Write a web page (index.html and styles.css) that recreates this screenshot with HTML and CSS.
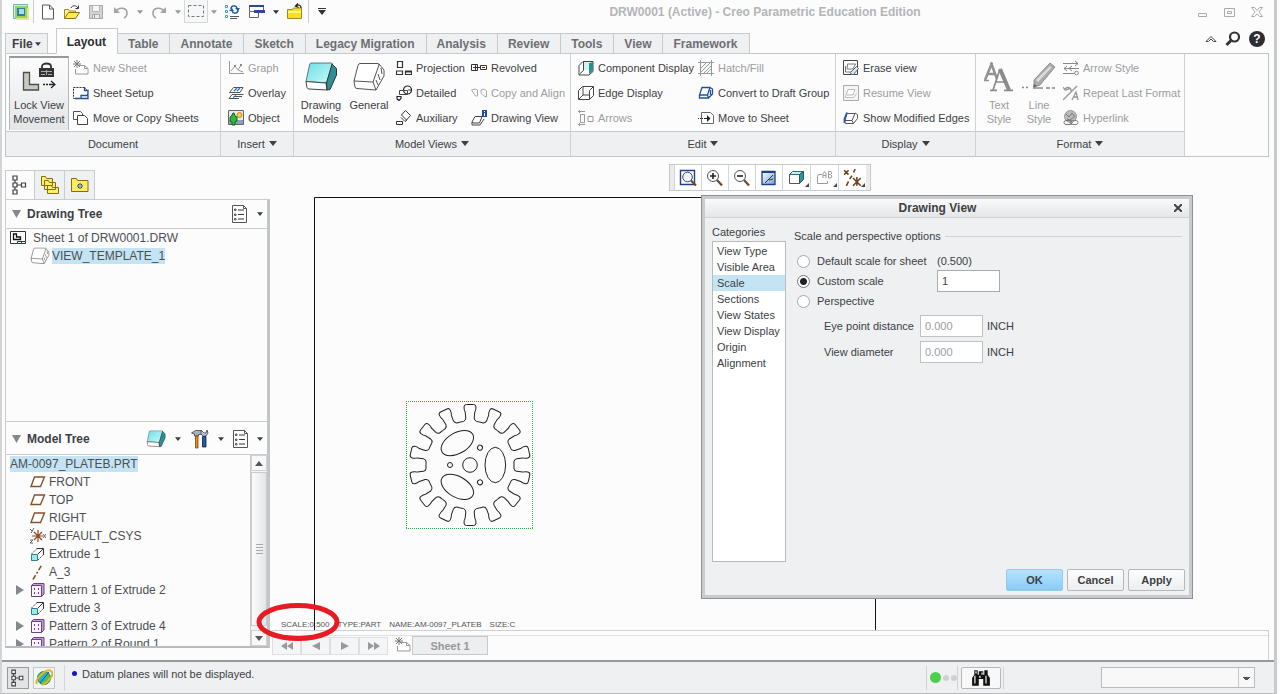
FILE: index.html
```html
<!DOCTYPE html>
<html lang="en">
<head>
<meta charset="utf-8">
<title>DRW0001 (Active) - Creo Parametric Education Edition</title>
<link rel="stylesheet" href="styles.css">
</head>
<body>
<svg class="defs" aria-hidden="true">
  <defs>
    <linearGradient id="teal" x1="0" y1="0" x2="1" y2="1"><stop offset="0" stop-color="#6fdfe4"/><stop offset="1" stop-color="#c9fbf8"/></linearGradient>
    <linearGradient id="lens" x1="0" y1="0" x2="1" y2="1"><stop offset="0" stop-color="#fff"/><stop offset="1" stop-color="#6fa3d8"/></linearGradient>
  </defs>
  <symbol id="app" viewBox="0 0 18 18"><path fill="#d5ebf4" stroke="#78aec8" d="M1.500 1.500h14v14h-14z"/><path fill="#9ed05a" d="M3 3h12v12H3z"/><path fill="#2c7fa8" d="M5 5h8v8H5z"/><path fill="#9ee0ee" d="M7 6h5v5H7z"/><path stroke="#dcea8a" fill="none" stroke-width="2" d="M4 16h12V5"/></symbol>
  <symbol id="page" viewBox="0 0 16 16"><path fill="#fff" stroke="#555" d="M2.500 1.500h7l4 4v10h-11zM9.500 1.500v4h4"/></symbol>
  <symbol id="open" viewBox="0 0 18 16"><path fill="#fdf28a" stroke="#a98722" d="M1.500 14.500v-9h4l1 1.500h6v2"/><path fill="#fcec4e" stroke="#8c701a" d="M1.500 14.500l4-6h11l-4 6z"/><path fill="none" stroke="#333" d="M8 4c1.500-3 5-3 7 0M12.500 4.500H15.500V1.500"/></symbol>
  <symbol id="save" viewBox="0 0 16 16"><path fill="#d4d4d4" stroke="#a6a6a6" d="M1.500 1.500h13v13h-13z"/><path fill="#f6f6f6" stroke="#b5b5b5" d="M4.500 1.500h7v6h-7z"/><path fill="#eee" stroke="#aaa" d="M4.500 10.500h7v4h-7z"/><path stroke="#999" d="M6.500 11v3"/></symbol>
  <symbol id="undo" viewBox="0 0 16 16"><path fill="none" stroke="#a3a3a3" stroke-width="1.600" d="M3 7c3-4 11-4 11 2 0 2-1 4-3 5"/><path fill="#a3a3a3" d="M1 3v6h6z"/></symbol>
  <symbol id="redo" viewBox="0 0 16 16"><path fill="none" stroke="#a3a3a3" stroke-width="1.600" d="M13 7C10 3 2 3 2 9c0 2 1 4 3 5"/><path fill="#a3a3a3" d="M15 3v6H9z"/></symbol>
  <symbol id="marquee" viewBox="0 0 16 16"><path fill="none" stroke="#777" stroke-dasharray="3 2" d="M.5 2.500h15v11H.5z"/></symbol>
  <symbol id="regen" viewBox="0 0 16 16"><path fill="none" stroke="#3aa6b4" d="M1.500 1.500h2v2h-2zM1.500 6.500h2v2h-2zM1.500 11.500h2v2h-2z"/><path stroke="#555" d="M6 12.500h9M6 14.500h7"/><path fill="none" stroke="#1b5aa8" stroke-width="1.500" d="M7 5c0-4 5-4 6-1M14 6c0 4-5 4-6 1"/><path fill="#1b5aa8" d="M11 4h5l-2 3zM5 7h5L8 4z"/></symbol>
  <symbol id="windows" viewBox="0 0 16 16"><path fill="#fff" stroke="#666" d="M.5 1.500h14v6H.5z"/><path fill="#fff" stroke="#666" d="M.5 7.500h9v6H.5z"/><path fill="#2d4a9a" d="M0 1h15v2H0zM5 6h11v3H5z"/></symbol>
  <symbol id="folderback" viewBox="0 0 16 17"><path fill="#f6df2a" stroke="#a08a14" d="M.5 15.500v-9h5l1-1.500h8v10.500z"/><path fill="#fdf67c" d="M1 8h13v2H1z"/><path fill="none" stroke="#222" stroke-width="1.300" d="M14 5c0-3-2-3.500-5-2.500M11 .5L8.500 3l3 1.500"/></symbol>
  <symbol id="down" viewBox="0 0 8 5"><path fill="currentColor" d="M0 0h8L4 5z"/></symbol>
  <symbol id="fold" viewBox="0 0 9 8"><path fill="currentColor" d="M0 0h9L4.500 8z"/></symbol>
  <symbol id="lock" viewBox="0 0 34 30"><path fill="#c9c9c0" stroke="#4c4c4c" stroke-width="1.300" d="M1.500 10.500h6v12h9v5.500h-15z"/><path fill="none" stroke="#333" stroke-width="1.800" d="M20 7V4.500c0-4 9-4 9 0V7"/><path fill="#333" d="M17 6h15v9H17z"/><path stroke="#aaa" d="M19 9.500h11M19 12.500h4M26 12.500h4M24.500 8v5"/><path stroke="#222" stroke-width="1.300" d="M21 22.500h2M24 22.500h2M27 22.500h5"/><path fill="none" stroke="#222" stroke-width="1.200" d="M29 19l4 3.500-4 3.500"/></symbol>
  <symbol id="newsheet" viewBox="0 0 16 16"><path fill="#fff" stroke="#999" d="M5.500 5.500h6l3.500 3v5.500H2.500V9M11.500 5.500v3h3.500"/><path stroke="#777" d="M4 0v8M0 4h8M1 1l6 6M7 1L1 7"/></symbol>
  <symbol id="setup" viewBox="0 0 16 16"><path fill="none" stroke="#333" stroke-dasharray="2 1" d="M.5 2.500h11l3 3v8H.5z"/><path fill="#fff" stroke="#234c9a" stroke-width="1.300" d="M8 13.500v-3h7v3zM11.500 2v3.500H15v4M2 13.500h5"/></symbol>
  <symbol id="copy" viewBox="0 0 16 16"><path fill="#fff" stroke="#555" d="M.5 1.500h7l2 2v6h-9z"/><path fill="#fff" stroke="#444" d="M4.500 5.500h7l3 3v6h-10z"/></symbol>
  <symbol id="graph" viewBox="0 0 16 16"><path fill="none" stroke="#999" d="M1.500 1v12.500H16M3 11l4-5 3 4 3-5M10 10l5 2"/><path fill="#888" d="M6 5h2v2H6zM12 4h2v2h-2z"/></symbol>
  <symbol id="overlay" viewBox="0 0 16 16"><path fill="#fff" stroke="#555" d="M5.500 2.500H15l-3 5H1.500zM4 9.500h11.500M4 9.500l-3 4h10M7 11.500h7"/><path stroke="#2e6cc0" stroke-width="1.300" d="M6 6l3-3M9 6l3-3M5 12.500l3-2"/></symbol>
  <symbol id="object" viewBox="0 0 16 16"><path fill="#e9e9f6" stroke="#666" d="M.5.5h15v14H.5z"/><path fill="#8aa0b8" d="M1 10h14v4H1z"/><circle cx="11.500" cy="5" r="2.500" fill="#f7d23a" stroke="#c98a20"/><path fill="#36b341" stroke="#11641a" d="M5 3L3.500 6 2 7v4l2 1v3h3v-3l2-1V7L7 6 6 3z"/></symbol>
  <symbol id="solid" viewBox="0 0 34 30"><path fill="url(#teal)" stroke="#456" stroke-width=".8" d="M7 1h20q2 0 1.500 2L22.500 21 2 19.500 5.500 3Q6 1 7 1z"/><path fill="#fff" stroke="#444" d="M2 19.500L22 21l1 7L5 27q-1.500 0-2-1.500z"/><path fill="#2f8f96" stroke="#333" d="M22.500 21L28 2l4.500 4.500V13L26 27.500l-3 .5z"/></symbol>
  <symbol id="wire" viewBox="0 0 34 30"><path fill="#fff" stroke="#555" d="M8 1.500h18q1 0 1 1.500l-6 17-19-1L6 3.500Q6.500 1.500 8 1.500zM2 19l1 6q.5 1.500 2 1.500l19 1.500L21 20M24 28l8-14V8l-5-6M24 18l2 5M26 12l2 6M29 6l1 6"/></symbol>
  <symbol id="projection" viewBox="0 0 16 16"><path fill="none" stroke="#333" stroke-width="1.200" d="M1.500 1.500h5v6h-5zM.5 11h6v3.500h-6zM9.500 11h6v3.500h-6zM9.500 12h6"/></symbol>
  <symbol id="detailed" viewBox="0 0 16 16"><circle cx="11.500" cy="5" r="4" fill="none" stroke="#222" stroke-width="1.200"/><path fill="none" stroke="#444" d="M3.500 5.500h8v4h-8zM12 5h3"/><path fill="none" stroke="#222" stroke-width="1.200" d="M1 11.500h4v2l-2 2-2-1.500z"/></symbol>
  <symbol id="auxiliary" viewBox="0 0 16 16"><path fill="#fff" stroke="#333" d="M9.500.5l5 5-4 4.500-5-5zM5 7.500l4 4 2-1.500M.5 11.500h6v3h-6z"/></symbol>
  <symbol id="revolved" viewBox="0 0 16 16"><path fill="none" stroke="#333" d="M.5 4.500h6v6h-6zM9.500 5.500h6v4h-6zM2 7.500h7M11 7.500h3M4.500 5v5"/></symbol>
  <symbol id="align" viewBox="0 0 16 16"><path fill="none" stroke="#aaa" d="M.5 5q4-2 6 0v6h-2zM10 5q4-2 5.500 1v6q-4-1-5.500-4z"/></symbol>
  <symbol id="viewinfo" viewBox="0 0 16 16"><path fill="#fff" stroke="#444" d="M4 6.500h7L8.500 13H3q-2 0-2-1zM1 12v3h8l4-6"/><path fill="#224c9e" d="M11 0h5v7h-5z"/><path stroke="#fff" d="M13.500 1v1M13.500 3v3"/></symbol>
  <symbol id="component" viewBox="0 0 16 16"><path fill="#fff" stroke="#444" d="M1 5.500l4-4h10v10l-4 3.500H1z"/><path fill="#fff" stroke="#444" d="M5.500 1.500v9L1 14.500"/><path fill="#cbf4f1" d="M6 2h5v8H6z"/><path fill="#28908e" d="M11 3l4-1v9l-4 3z"/></symbol>
  <symbol id="edge" viewBox="0 0 16 16"><path fill="#fff" stroke="#444" d="M.5 5.500l4-4h11v9l-4 4H.5zM5 2v8h7M5 10l-4 4M11.500 14V5.500L15 2"/></symbol>
  <symbol id="arrows" viewBox="0 0 16 16"><path fill="none" stroke="#999" d="M2.500 4.500h4v8h-4zM10 6.500h5v5h-5zM0 1.500h7M2 0L.5 1.500 2 3M0 14.500h7M2 13L.5 14.500 2 16"/></symbol>
  <symbol id="hatch" viewBox="0 0 16 16"><path fill="none" stroke="#999" d="M0 2.500h16M0 13.500h16M2.500 0v16M13.500 0v16M3 8l5-5M3 12l9-9M6 13l7-7M9 13l4-4"/></symbol>
  <symbol id="convert" viewBox="0 0 16 16"><path fill="#fff" stroke="#23509e" stroke-width="1.300" d="M4 2.500h8L9.500 10h-8zM1.500 10v3h9l4-4V4L12 2.500M9.500 10l1 3M12.500 5v5"/></symbol>
  <symbol id="move" viewBox="0 0 16 16"><path fill="#fff" stroke="#666" d="M3.500 2.500h9l3 3v8h-12z"/><path stroke="#222" stroke-dasharray="1 1" d="M0 8.500h6"/><path fill="#222" d="M6 8h3V5l3.500 3.500L9 12V9H6z"/></symbol>
  <symbol id="erase" viewBox="0 0 16 16"><path fill="#fff" stroke="#444" d="M.5.5h14v14H.5z"/><path fill="none" stroke="#777" d="M4.500 4h8L10 9H4zM2.500 6v6h6"/><path fill="#dfe8ef" stroke="#567" d="M7.500 12.500l6-6 2 2-5 6h-2z"/></symbol>
  <symbol id="resume" viewBox="0 0 16 16"><path fill="#f5f5f5" stroke="#aaa" d="M.5.5h15v15H.5z"/><path fill="#fff" stroke="#bbb" d="M5 4.500h7L10 10H3zM2.500 10.500v2h8l3-4"/></symbol>
  <symbol id="modified" viewBox="0 0 16 16"><path fill="#fff" stroke="#555" d="M4 3.500h8L9 10.500H2zM1.500 11l1 2.500h8l4-5v-4L12 3M9 10.500l1.500 3"/><path fill="none" stroke="#2458a8" stroke-width="1.800" d="M4 2.500L1.500 9v4"/></symbol>
  <symbol id="textstyle" viewBox="0 0 30 30"><path fill="none" stroke="#929292" stroke-width="2.500" d="M1 18L7.500 2 13 17M4 12h7"/><path fill="none" stroke="#929292" stroke-width="1.500" d="M0 18.500h5M6 1.500h3"/><path fill="none" stroke="#8b8b8b" stroke-width="4" d="M16 7l9 21"/><path fill="none" stroke="#8b8b8b" stroke-width="1.700" d="M16 7L9 28M12 20h10M6 28.300h7M20 28.300h9"/></symbol>
  <symbol id="linestyle" viewBox="0 0 34 30"><path fill="#ababab" stroke="#8f8f8f" d="M12 18L28 1l5 4-15 18-6 2z"/><path fill="#ddd" d="M14 18L28 4l1.500 1.500L16 20z"/><path fill="#666" d="M12 22l-1 4 4-2z"/><path stroke="#888" stroke-width="1.500" d="M0 25.500h2M4 25.500h2M11 26h10M24 26h4M30 26h3"/></symbol>
  <symbol id="arrowstyle" viewBox="0 0 16 16"><path fill="none" stroke="#888" d="M0 3.500h15M12 1l3 2.500L12 6M1 8.500h15M4 6L1 8.500 4 11M9 6L6 8.500 9 11M0 13.500h12"/><circle cx="13.500" cy="13" r="1.800" fill="#fff" stroke="#888"/></symbol>
  <symbol id="repeat" viewBox="0 0 16 16"><path fill="none" stroke="#999" stroke-width="1.300" d="M2 5c1-4 6-3 6 1M0 2l2 3 4-1M0 15L14 1M9 15l4-8 2 8M10 12h5"/></symbol>
  <symbol id="hyperlink" viewBox="0 0 16 16"><circle cx="7.500" cy="6.500" r="6" fill="#bcbcbc" stroke="#999"/><path fill="none" stroke="#777" d="M3 4l3 3 3-4 3 4M4 9l3 1 4-3"/><rect x="1" y="10.500" width="8" height="4" rx="2" fill="none" stroke="#777"/><rect x="7" y="10.500" width="8" height="4" rx="2" fill="none" stroke="#888"/></symbol>
  <symbol id="tree" viewBox="0 0 16 20"><path fill="#fff" stroke="currentColor" stroke-width="1.200" d="M3 5v3M3 12v3M5 10h4M1 1h4v4H1zM1 8h4v4H1zM1 15h4v4H1zM9.500 8h4v4h-4z"/></symbol>
  <symbol id="folders" viewBox="0 0 20 20"><path fill="#f8ef6a" stroke="#846c14" d="M1.500 10.500v-9h4l1 2h6v7zM4.500 14.500v-9h4l1 2h6v7zM7.500 18.500v-8h4l1 2h6v6z"/></symbol>
  <symbol id="favorites" viewBox="0 0 18 16"><path fill="#f7ed5f" stroke="#846c14" d="M.5 14.500v-13h5l1 2h10.500v11z"/><path stroke="#1a2f9c" d="M9 6v6M6 9h6M7 7l4 4M11 7l-4 4"/><circle cx="9" cy="9" r="1" fill="#f7ed5f"/></symbol>
  <symbol id="settings" viewBox="0 0 16 18"><path fill="#fff" stroke="#555" d="M.5.5h11l3 3v14H.5zM11.500.5v3h3"/><path stroke="#333" d="M6 5h6M6 9.500h6M6 14h6"/><path fill="none" stroke="#555" d="M2.500 4h1.500v1.500H2.500zM2.500 9h1.500v1.500H2.500zM2.500 13.500h1.500v1.500H2.500z"/></symbol>
  <symbol id="sheet" viewBox="0 0 16 14"><path fill="#fff" stroke="#333" d="M.5.5h15v12H.5z"/><path fill="#fff" stroke="#111" stroke-width="1.300" d="M3.500 3v5.500h7V6h-4V3z"/><path fill="#fff" stroke="#23309c" d="M7.500 10.500h8v2h-8zM11.500 10v3"/></symbol>
  <symbol id="tools" viewBox="0 0 18 20"><path fill="#aab3bc" stroke="#444" stroke-width=".8" d="M.5 4l4-2.500h6v4H7.500V7h-4V5z"/><path fill="#e48a1e" stroke="#7d4508" stroke-width=".8" d="M4.500 7h2.500v12H4.500z"/><path fill="#bcc9d6" stroke="#345" stroke-width=".8" d="M10 1v4l2 2h3l2-3-1-3-1 3h-2z"/><path fill="#2857a8" stroke="#123" stroke-width=".8" d="M11.500 7.500h3.500V18h-3.500z"/></symbol>
  <symbol id="plane" viewBox="0 0 16 12"><path fill="#fff" stroke="#8a5028" stroke-width="1.400" d="M4.500 1h10l-4 9.500H1z"/></symbol>
  <symbol id="csys" viewBox="0 0 16 16"><path stroke="#8a4a22" stroke-width="1.200" d="M8 2v12M2 8h11M4 4l8 8M12 4l-8 8"/><path fill="none" stroke="#666" d="M0 1l2 2M4 0L1 5M13 6l3 4M16 6l-3 4M0 12h3l-3 3h3"/></symbol>
  <symbol id="extrude" viewBox="0 0 16 16"><path fill="#9fe9ec" stroke="#2f8088" d="M1.500 8.500h6v6h-6z"/><path fill="none" stroke="#555" stroke-dasharray="2 1" d="M1.500 8L7 2.500M8 14l6-6"/><path fill="none" stroke="#333" d="M8 8l5-5M7 2.500h6.500V9"/></symbol>
  <symbol id="axis" viewBox="0 0 16 16"><path stroke="#8a4a22" stroke-width="1.500" stroke-dasharray="5 2 2 2" d="M3 15.500L12 .5"/></symbol>
  <symbol id="pattern" viewBox="0 0 16 16"><path fill="#c49bdd" stroke="#6a4585" d="M1 4l2.500-2.500H14v10.500l-2.500 2.500z"/><path fill="#fbf3ff" stroke="#6a4585" d="M1.500 3.500h10v11h-10z"/><path fill="#6a4592" d="M4 6h1v2H4zM8 6h1v2H8zM4 10h1v2H4zM8 10h1v2H8z"/></symbol>
  <symbol id="fit" viewBox="0 0 18 18"><path fill="#fff" stroke="#1f3f8f" stroke-width="1.400" d="M1.500 1.500h14v14h-14z"/><circle cx="8.500" cy="8" r="4.800" fill="#edf5fb" stroke="#444"/><path stroke="#70482c" stroke-width="2.200" d="M12 11.500l5 5"/></symbol>
  <symbol id="zoomin" viewBox="0 0 18 18"><circle cx="7" cy="7" r="5.500" fill="#fafcfd" stroke="#555"/><path stroke="#222" stroke-width="1.600" d="M4 7h6M7 4v6"/><path stroke="#70482c" stroke-width="2.200" d="M11 11l5 5.500"/></symbol>
  <symbol id="zoomout" viewBox="0 0 18 18"><circle cx="7" cy="7" r="5.500" fill="#fafcfd" stroke="#555"/><path stroke="#222" stroke-width="1.600" d="M4 7h6"/><path stroke="#70482c" stroke-width="2.200" d="M11 11l5 5.500"/></symbol>
  <symbol id="repaint" viewBox="0 0 18 18"><path fill="url(#lens)" stroke="#1f3f8f" stroke-width="1.300" d="M2 2.500h13v13H2z"/><path stroke="#1f3f8f" stroke-width="2" d="M2 3h13"/><path fill="none" stroke="#334" d="M5 14l8-8M9 11l4-1"/></symbol>
  <symbol id="cube" viewBox="0 0 18 18"><path fill="#fff" stroke="#555" d="M1.500 5.500h10v9h-10z"/><path fill="#bff3f0" stroke="#367" d="M1.500 5.500l3-3h11l-4 3z"/><path fill="#249c9a" stroke="#355" d="M11.500 5.500l4-3v8l-4 4z"/></symbol>
  <symbol id="annot" viewBox="0 0 18 18"><path fill="#fff" stroke="#999" d="M6 5.500H2.500l-1 2v7h10V12"/><path fill="none" stroke="#999" d="M7 9V4.500l1.500-2L10 4.500V9M7 6.500h3M12.500 9V2.500H15l1 1.500-1.500 1.500L16 7l-1 2zM12.500 5.500h2"/></symbol>
  <symbol id="datum" viewBox="0 0 18 18"><path stroke="#70401c" stroke-width="1.400" d="M1 2l4 4M5 2L1 6M11 1L9.500 4M8 7l-2 3M5 12l-2 4M9 9l7 7M16 9l-7 7M12.500 8v8"/></symbol>
  <symbol id="globe" viewBox="0 0 18 18"><circle cx="9" cy="9" r="6.500" fill="#4cc05b" stroke="#137c83"/><path fill="#2cb5d0" d="M4 8l5-4 4 1-5 8-3 1z"/><path fill="none" stroke="#e3b61a" stroke-width="2" d="M2 15C-1 10 12-1 16 2s-2 11-9 14"/><path fill="none" stroke="#175b88" d="M5 14L14 3"/></symbol>
  <symbol id="binoc" viewBox="0 0 18 16"><path fill="#111" d="M3 1h3v4h1V2h4v3h1V1h3v4l2 3v7h-6V9H7v6H1V8l2-3z"/><path stroke="#ddd" stroke-width="1.200" d="M3.500 6v7M13.500 6v7M8 6v2M10 3v2M4.500 2v2"/></symbol>
  <symbol id="search" viewBox="0 0 16 16"><circle cx="9.500" cy="6" r="4.500" fill="none" stroke="#333" stroke-width="2.200"/><path stroke="#333" stroke-width="3" d="M6 9.500L1.500 14"/></symbol>
  <symbol id="tooth" viewBox="-65 -65 130 130"><path fill="none" stroke="#222" d="M-9.800-42.900L-6.500-43.600Q-4.200-44.500-4.200-47L-4.800-53Q-6-55-6-58Q-6-60.500-3.500-60.500H3.500Q6-60.500 6-58Q6-55 4.800-53L4.200-47Q4.200-44.500 6.500-43.600L9.800-42.900"/></symbol>
</svg>

<div class="app">
  <header>
    <div class="quick">
      <span class="logo"><svg width="18" height="18"><use href="#app"/></svg></span>
      <button class="q" aria-label="New"><svg width="16" height="17"><use href="#page"/></svg></button>
      <button class="q" aria-label="Open"><svg width="18" height="16"><use href="#open"/></svg></button>
      <button class="q" aria-label="Save"><svg width="16" height="16"><use href="#save"/></svg></button>
      <button class="q wide" aria-label="Undo"><svg width="16" height="16"><use href="#undo"/></svg></button>
      <button class="drop dim" aria-label="Undo list"><svg width="6" height="4"><use href="#down"/></svg></button>
      <button class="q wide" aria-label="Redo"><svg width="16" height="16"><use href="#redo"/></svg></button>
      <button class="drop dim" aria-label="Redo list"><svg width="6" height="4"><use href="#down"/></svg></button>
      <button class="q boxed" aria-label="Select"><svg width="16" height="16"><use href="#marquee"/></svg></button>
      <button class="drop dim" aria-label="Select list"><svg width="6" height="4"><use href="#down"/></svg></button>
      <button class="q" aria-label="Regenerate"><svg width="16" height="16"><use href="#regen"/></svg></button>
      <button class="q wide" aria-label="Windows"><svg width="16" height="16"><use href="#windows"/></svg></button>
      <button class="drop" aria-label="Windows list"><svg width="6" height="4"><use href="#down"/></svg></button>
      <button class="q wide" aria-label="Close window"><svg width="16" height="17"><use href="#folderback"/></svg></button>
      <button class="drop more" aria-label="Customize"><svg width="8" height="7" viewBox="0 0 8 7"><path fill="#333" d="M0 0h8v1H0zM0 2h8L4 7z"/></svg></button>
      <h1>DRW0001 (Active) - Creo Parametric Education Edition</h1>
      <div class="winctl">
        <button aria-label="Minimize"><svg width="12" height="12" viewBox="0 0 12 12"><path fill="none" stroke="#aaa" d="M1.500 7.500h8v3h-8z"/></svg></button>
        <button aria-label="Restore"><svg width="12" height="12" viewBox="0 0 12 12"><path fill="none" stroke="#aaa" d="M.5 2.500h10v8H.5zM3.500 5.500h4v2h-4z"/></svg></button>
        <button aria-label="Close"><svg width="12" height="12" viewBox="0 0 12 12"><path fill="none" stroke="#aaa" d="M.5 1.500h3l2.500 3 2.500-3h3L8 6l3.500 4.500h-3L6 8l-2.500 2.500h-3L4 6z"/></svg></button>
      </div>
    </div>

    <nav class="tabs">
      <button class="file">File <svg width="6" height="4"><use href="#down"/></svg></button>
      <button class="active">Layout</button><button>Table</button><button>Annotate</button><button>Sketch</button><button>Legacy Migration</button><button>Analysis</button><button>Review</button><button>Tools</button><button>View</button><button>Framework</button>
      <div class="help">
        <button aria-label="Collapse ribbon"><svg width="12" height="8" viewBox="0 0 12 8"><path fill="#fff" stroke="#444" d="M1 6.500l5-5 5 5H8.500L6 4 3.500 6.500z"/></svg></button>
        <button aria-label="Search"><svg width="16" height="16"><use href="#search"/></svg></button>
        <button class="qm" aria-label="Help">?</button>
      </div>
    </nav>

    <div class="ribbon">
      <section class="g-doc">
        <div class="tools">
          <button class="big pressed"><svg width="34" height="30"><use href="#lock"/></svg>Lock View<br>Movement</button>
          <div class="col"><button class="t dis"><svg><use href="#newsheet"/></svg>New Sheet</button><button class="t"><svg><use href="#setup"/></svg>Sheet Setup</button><button class="t"><svg><use href="#copy"/></svg>Move or Copy Sheets</button></div>
        </div>
        <footer>Document</footer>
      </section>
      <section class="g-ins">
        <div class="tools"><div class="col"><button class="t dis"><svg><use href="#graph"/></svg>Graph</button><button class="t"><svg><use href="#overlay"/></svg>Overlay</button><button class="t"><svg><use href="#object"/></svg>Object</button></div></div>
        <footer>Insert <svg><use href="#down"/></svg></footer>
      </section>
      <section class="g-mod">
        <div class="tools">
          <button class="big"><svg width="34" height="30"><use href="#solid"/></svg>Drawing<br>Models</button>
          <button class="big"><svg width="34" height="30"><use href="#wire"/></svg>General<br>&nbsp;</button>
          <div class="col"><button class="t"><svg><use href="#projection"/></svg>Projection</button><button class="t"><svg><use href="#detailed"/></svg>Detailed</button><button class="t"><svg><use href="#auxiliary"/></svg>Auxiliary</button></div>
          <div class="col"><button class="t"><svg><use href="#revolved"/></svg>Revolved</button><button class="t dis"><svg><use href="#align"/></svg>Copy and Align</button><button class="t"><svg><use href="#viewinfo"/></svg>Drawing View</button></div>
        </div>
        <footer>Model Views <svg><use href="#down"/></svg></footer>
      </section>
      <section class="g-edit">
        <div class="tools">
          <div class="col"><button class="t"><svg><use href="#component"/></svg>Component Display</button><button class="t"><svg><use href="#edge"/></svg>Edge Display</button><button class="t dis"><svg><use href="#arrows"/></svg>Arrows</button></div>
          <div class="col"><button class="t dis"><svg><use href="#hatch"/></svg>Hatch/Fill</button><button class="t"><svg><use href="#convert"/></svg>Convert to Draft Group</button><button class="t"><svg><use href="#move"/></svg>Move to Sheet</button></div>
        </div>
        <footer>Edit <svg><use href="#down"/></svg></footer>
      </section>
      <section class="g-disp">
        <div class="tools"><div class="col"><button class="t"><svg><use href="#erase"/></svg>Erase view</button><button class="t dis"><svg><use href="#resume"/></svg>Resume View</button><button class="t"><svg><use href="#modified"/></svg>Show Modified Edges</button></div></div>
        <footer>Display <svg><use href="#down"/></svg></footer>
      </section>
      <section class="g-fmt">
        <div class="tools">
          <button class="big dis"><svg width="30" height="30"><use href="#textstyle"/></svg>Text<br>Style</button>
          <button class="big dis"><svg width="34" height="30"><use href="#linestyle"/></svg>Line<br>Style</button>
          <div class="col"><button class="t dis"><svg><use href="#arrowstyle"/></svg>Arrow Style</button><button class="t dis"><svg><use href="#repeat"/></svg>Repeat Last Format</button><button class="t dis"><svg><use href="#hyperlink"/></svg>Hyperlink</button></div>
        </div>
        <footer>Format <svg><use href="#down"/></svg></footer>
      </section>
    </div>
  </header>

  <main>
    <aside>
      <div class="sidetabs">
        <button class="on" aria-label="Model tree"><svg width="16" height="20"><use href="#tree"/></svg></button>
        <button aria-label="Folder browser"><svg width="20" height="20"><use href="#folders"/></svg></button>
        <button aria-label="Favorites"><svg width="18" height="16"><use href="#favorites"/></svg></button>
      </div>
      <div class="panel">
        <div class="phead"><svg class="tri" width="9" height="8"><use href="#fold"/></svg><h2>Drawing Tree</h2>
          <button aria-label="Settings"><svg width="16" height="18"><use href="#settings"/></svg></button><button class="pd" aria-label="Settings list"><svg width="6" height="4"><use href="#down"/></svg></button></div>
        <ul class="dtree">
          <li><svg width="16" height="14"><use href="#sheet"/></svg><span>Sheet 1 of DRW0001.DRW</span></li>
          <li class="child"><svg width="20" height="18" viewBox="0 0 34 30"><use href="#wire"/></svg><span class="sel">VIEW_TEMPLATE_1</span></li>
        </ul>
        <div class="phead model"><svg class="tri" width="9" height="8"><use href="#fold"/></svg><h2>Model Tree</h2>
          <button aria-label="Show"><svg width="20" height="18" viewBox="0 0 34 30"><use href="#solid"/></svg></button><button class="pd" aria-label="Show list"><svg width="6" height="4"><use href="#down"/></svg></button>
          <button aria-label="Tools"><svg width="20" height="20"><use href="#tools"/></svg></button><button class="pd" aria-label="Tools list"><svg width="6" height="4"><use href="#down"/></svg></button>
          <button aria-label="Settings"><svg width="16" height="18"><use href="#settings"/></svg></button><button class="pd" aria-label="Settings list"><svg width="6" height="4"><use href="#down"/></svg></button></div>
        <div class="mwrap">
          <ul class="mtree">
            <li class="root"><span class="sel">AM-0097_PLATEB.PRT</span></li>
            <li><i></i><svg><use href="#plane"/></svg>FRONT</li>
            <li><i></i><svg><use href="#plane"/></svg>TOP</li>
            <li><i></i><svg><use href="#plane"/></svg>RIGHT</li>
            <li><i></i><svg><use href="#csys"/></svg>DEFAULT_CSYS</li>
            <li><i></i><svg><use href="#extrude"/></svg>Extrude 1</li>
            <li><i></i><svg><use href="#axis"/></svg>A_3</li>
            <li><i class="exp"></i><svg><use href="#pattern"/></svg>Pattern 1 of Extrude 2</li>
            <li><i></i><svg><use href="#extrude"/></svg>Extrude 3</li>
            <li><i class="exp"></i><svg><use href="#pattern"/></svg>Pattern 3 of Extrude 4</li>
            <li><i class="exp"></i><svg><use href="#pattern"/></svg>Pattern 2 of Round 1</li>
          </ul>
          <div class="scroll">
            <button class="up" aria-label="Scroll up"><svg width="8" height="5"><use href="#down"/></svg></button>
            <div class="thumb"><b></b></div>
            <button aria-label="Scroll down"><svg width="8" height="5"><use href="#down"/></svg></button>
          </div>
        </div>
      </div>
    </aside>

    <div class="work">
      <div class="canvas">
        <svg class="drawing" aria-label="Plate drawing">
          <path fill="none" stroke="#111" d="M42.500 480V40.500H603.500V480"/>
          <path fill="none" stroke="#22b24c" stroke-dasharray="1 1" shape-rendering="crispEdges" d="M134 244.500H261M134 371.500H261M134.500 244V372M260.500 244V372"/>
          <svg x="133" y="243" width="130" height="130" viewBox="-65 -65 130 130">
            <g id="teeth"></g>
            <g fill="none" stroke="#222">
              <circle r="7.300"/>
              <g id="slot"><ellipse cx="25.300" rx="10.300" ry="17.700"/><circle cx="-20" r="2.500"/></g>
              <use href="#slot" transform="rotate(120)"/><use href="#slot" transform="rotate(240)"/>
            </g>
          </svg>
        </svg>
        <p class="info"><span>SCALE:0.500</span><span>TYPE:PART</span><span>NAME:AM-0097_PLATEB</span><span>SIZE:C</span></p>
        <div class="viewbar">
          <button aria-label="Refit"><svg width="18" height="18"><use href="#fit"/></svg></button><button aria-label="Zoom in"><svg width="18" height="18"><use href="#zoomin"/></svg></button><button aria-label="Zoom out"><svg width="18" height="18"><use href="#zoomout"/></svg></button><button aria-label="Repaint"><svg width="18" height="18"><use href="#repaint"/></svg></button><button class="m" aria-label="Display style"><svg width="18" height="18"><use href="#cube"/></svg></button><button class="m" aria-label="Annotation display"><svg width="18" height="18"><use href="#annot"/></svg></button><button class="m" aria-label="Datum display"><svg width="20" height="20"><use href="#datum"/></svg></button>
        </div>

        <form class="dialog">
          <div class="dtitle"><h2>Drawing View</h2><button type="button" aria-label="Close dialog"><svg width="8" height="8" viewBox="0 0 8 8"><path stroke="#444" stroke-width="2" d="M0 0l8 8M8 0L0 8"/></svg></button></div>
          <div class="dbody">
            <div class="cats"><h3>Categories</h3>
              <ul><li><button type="button">View Type</button></li><li><button type="button">Visible Area</button></li><li><button type="button" class="cur">Scale</button></li><li><button type="button">Sections</button></li><li><button type="button">View States</button></li><li><button type="button">View Display</button></li><li><button type="button">Origin</button></li><li><button type="button">Alignment</button></li></ul>
            </div>
            <fieldset>
              <legend>Scale and perspective options</legend>
              <div class="r"><input type="radio" name="scale" id="r1"><label for="r1">Default scale for sheet</label><span>(0.500)</span></div>
              <div class="r"><input type="radio" name="scale" id="r2" checked><label for="r2">Custom scale</label><input class="box" type="text" value="1" aria-label="Custom scale value"></div>
              <div class="r"><input type="radio" name="scale" id="r3"><label for="r3">Perspective</label></div>
              <div class="f"><label for="eye">Eye point distance</label><input class="box" id="eye" type="text" value="0.000" disabled><span>INCH</span></div>
              <div class="f"><label for="dia">View diameter</label><input class="box" id="dia" type="text" value="0.000" disabled><span>INCH</span></div>
            </fieldset>
          </div>
          <div class="dbtns"><button type="button" class="ok">OK</button><button type="button">Cancel</button><button type="button">Apply</button></div>
        </form>
      </div>
      <div class="sheets">
        <button class="nav" aria-label="First sheet"><svg width="12" height="8" viewBox="0 0 12 8"><path fill="currentColor" d="M6 0v8L0 4zM12 0v8L6 4z"/></svg></button>
        <button class="nav" aria-label="Previous sheet"><svg width="8" height="8" viewBox="0 0 8 8"><path fill="currentColor" d="M8 0v8L0 4z"/></svg></button>
        <button class="nav" aria-label="Next sheet"><svg width="8" height="8" viewBox="0 0 8 8"><path fill="currentColor" d="M0 0v8l8-4z"/></svg></button>
        <button class="nav" aria-label="Last sheet"><svg width="12" height="8" viewBox="0 0 12 8"><path fill="currentColor" d="M0 0v8l6-4zM6 0v8l6-4z"/></svg></button>
        <button class="add" aria-label="New sheet"><svg width="16" height="16"><use href="#newsheet"/></svg></button>
        <button class="sheet">Sheet 1</button>
      </div>
      <svg class="mark" width="84" height="42" viewBox="0 0 84 42" aria-hidden="true"><ellipse cx="42" cy="21" rx="39" ry="16.500" fill="none" stroke="#e61b24" stroke-width="5"/></svg>
    </div>
  </main>

  <div class="status">
    <button class="sb in" aria-label="Toggle tree"><svg width="14" height="18"><use href="#tree"/></svg></button>
    <button class="sb" aria-label="Toggle browser"><svg width="18" height="18"><use href="#globe"/></svg></button>
    <p>Datum planes will not be displayed.</p>
    <div class="lights"><b class="green"></b><b></b><b></b></div>
    <div class="find"><button aria-label="Find"><svg width="20" height="18"><use href="#binoc"/></svg></button></div>
    <select aria-label="Selection filter"><option></option></select>
  </div>
</div>
<script src="gear.js"></script>
</body>
</html>
```
FILE: gear.js
```js
const NS = 'http://www.w3.org/2000/svg';
const teeth = document.getElementById('teeth');
const shape = document.querySelector('#tooth path');
const COUNT = 14;
for (let i = 0; i < COUNT; i++) {
  const g = document.createElementNS(NS, 'g');
  g.setAttribute('transform', `rotate(${(i * 360) / COUNT})`);
  g.appendChild(shape.cloneNode());
  teeth.appendChild(g);
}
```
FILE: styles.css
```css
* { box-sizing: border-box; }
body { margin: 0; background: #fcfcfc; font: 11px/14px "Liberation Sans", Arial, sans-serif; color: #3c3f44; }
button { font: inherit; color: inherit; background: none; border: 0; padding: 0; margin: 0; }
button, svg { flex: none; }
svg { display: block; }
h1, h2, h3, p, ul { margin: 0; padding: 0; list-style: none; font-size: 12px; }
.defs { position: absolute; width: 0; height: 0; }

.app { height: 100vh; margin-right: 3px; display: flex; flex-direction: column; border-left: 2px solid #d2d4d6; border-right: 3px solid #c8cacc; border-bottom: 1px solid #b8babd; }

/* quick access bar */
.quick { display: flex; align-items: center; height: 23px; padding-left: 10px; }
.quick button { display: flex; align-items: center; justify-content: center; height: 23px; }
.logo { display: flex; align-items: center; width: 22px; height: 23px; margin-right: 2px; border-right: 1px solid #c9cbcd; }
.q { width: 24px; }
.q.wide { width: 26px; }
.q.boxed { border: 1px solid #d5d7d9; border-top: 0; background: #f6f7f8; }
.drop { width: 12px; color: #333; }
.drop.dim { color: #999; }
.drop.more { width: 27px; border-left: 1px solid #c9cbcd; }
.quick h1 { flex: 1; text-align: center; color: #b3b5b8; line-height: 22px; padding-right: 2px; }
.winctl { display: flex; gap: 15px; padding-right: 11px; }

/* ribbon tabs */
.tabs { display: flex; align-items: flex-end; height: 31px; padding-left: 3px; font-weight: bold; font-size: 12px; color: #6c6f73; position: relative; z-index: 1; }
.tabs > button { height: 21px; padding: 0 11px 0 10px; background: #eef0f2; border: solid #c5cacd; border-width: 1px 1px 1px 0; }
.tabs > .file { display: flex; align-items: center; gap: 2px; padding: 0 6px; margin-right: 8px; border-left-width: 1px; color: #3c3f44; }
.tabs > .active { height: 26px; background: #fcfcfc; border-left-width: 1px; border-bottom-color: #fcfcfc; color: #2c2e31; padding: 2px 11px 0 10px; }
.help { margin-left: auto; display: flex; align-items: center; gap: 8px; padding: 0 9px 7px 0; }
.qm { width: 16px; height: 16px; border-radius: 8px; background: #2e2e31; color: #fff; font-weight: bold; }

/* ribbon */
.ribbon { display: flex; height: 104px; margin: -1px 5px 0 3px; border: 1px solid #c0c5c8; }
.ribbon section { display: flex; flex-direction: column; border-right: 1px solid #cfd3d6; }
.ribbon footer { display: flex; align-items: center; justify-content: center; gap: 4px; height: 25px; padding-bottom: 1px; background: #eef0f2; border-top: 1px solid #c5cacd; }
.ribbon footer svg { width: 8px; height: 5px; }
.tools { flex: 1; display: flex; padding-top: 1px; }
.big { display: flex; flex-direction: column; align-items: center; line-height: 14px; padding-top: 7px; }
.big svg { margin-bottom: 6px; }
.big.pressed { width: 60px; margin: 1px 4px 1px 3px; background: linear-gradient(#fcfcfc, #e3e5e8); border: 1px solid #b5b8bb; border-top: 2px solid #999; border-bottom: 0; padding-top: 4px; }
.col { display: flex; flex-direction: column; }
.t { display: flex; align-items: center; gap: 4px; height: 25px; white-space: nowrap; }
.t svg { width: 16px; height: 16px; }
.dis { color: #9b9da0; }
.g-doc { width: 215px; }
.g-ins { width: 73px; }
.g-ins .tools { padding-left: 7px; }
.g-mod { width: 277px; }
.g-mod .big { width: 48px; }
.g-mod .tools { padding-left: 3px; }
.g-mod .col { width: 75px; margin-left: 3px; }
.g-mod .col + .col { margin-left: 0; }
.g-edit { width: 265px; }
.g-edit .tools { padding-left: 7px; }
.g-edit .col { width: 120px; }
.g-disp { width: 140px; }
.g-disp .tools { padding-left: 7px; }
.g-fmt { width: 209px; }
.g-fmt .big { width: 40px; }
.g-fmt .tools { padding-left: 3px; }
.g-fmt .col { margin-left: 4px; }

/* main area */
main { flex: 1; min-height: 0; display: flex; }
aside { width: 268px; padding: 13px 0 12px 3px; display: flex; flex-direction: column; }
.sidetabs { display: flex; height: 29px; }
.sidetabs button { width: 30px; display: flex; align-items: center; justify-content: center; background: #eef0f2; border: solid #c9cccf; border-width: 1px 1px 0 0; }
.sidetabs .on { background: #fcfcfc; border-left-width: 1px; }
.panel { flex: 1; min-height: 0; display: flex; flex-direction: column; border: 1px solid #c9cccf; border-right: 3px solid #c3c6c9; border-bottom: 2px solid #b9bcbf; }
.phead { display: flex; align-items: center; height: 29px; padding: 0 4px 0 6px; border-bottom: 1px solid #c9cccf; }
.phead.model { height: 34px; padding-top: 1px; border-top: 1px solid #c9cccf; }
.phead h2 { flex: 1; margin-left: 6px; }
.tri { color: #85888c; }
.pd { width: 6px; margin: 0 0 0 9px; }
.pd + button { margin-left: 9px; }
.pd + button + .pd { margin-left: 8px; }
.dtree { height: 192px; }
.dtree li { display: flex; align-items: center; height: 18px; padding-left: 4px; gap: 7px; font-weight: normal; }
.dtree .child { padding-left: 24px; gap: 2px; }
.sel { background: #c4e4f3; line-height: 16px; }
.dtree, .mtree { font-size: 12px; color: #4c4f54; }
.mwrap { flex: 1; min-height: 0; display: flex; overflow: hidden; }
.mtree { flex: 1; overflow: hidden; }
.mtree li { display: flex; align-items: center; height: 18px; padding-left: 8px; }
.mtree .root { padding-left: 4px; }
.mtree svg { width: 16px; height: 16px; margin-right: 3px; }
.mtree i { width: 16px; height: 10px; }
.mtree .exp { background: #85888c; clip-path: polygon(2px 0, 10px 5px, 2px 10px); }
.scroll { width: 17px; display: flex; flex-direction: column; background: #f3f4f5; border-left: 1px solid #c9cccf; color: #555; }
.scroll button { height: 16px; display: flex; align-items: center; justify-content: center; border: 1px solid #d0d2d4; background: #f8f8f8; }
.scroll .up svg { transform: rotate(180deg); }
.thumb { flex: 1; display: flex; align-items: center; justify-content: center; margin: 1px 0 4px; border: 1px solid #c9cccf; background: linear-gradient(90deg, #fcfcfc, #e3e5e7); }
.thumb b { width: 7px; height: 11px; background: repeating-linear-gradient(#aaa 0 1px, transparent 1px 3px); }

.work { flex: 1; min-width: 0; position: relative; display: flex; flex-direction: column; margin-right: 5px; }
.canvas { flex: 1; position: relative; }
.drawing { position: absolute; left: 2px; top: 0; width: calc(100% - 2px); height: 100%; overflow: hidden; }
.info { position: absolute; left: 11px; bottom: 0; display: flex; gap: 8px; font-size: 8px; line-height: 10px; color: #555; }
.viewbar { position: absolute; left: 399px; top: 7px; display: flex; height: 27px; padding: 0 4px; background: #e9ebed; border: 1px solid #c5cacd; }
.viewbar button { position: relative; width: 27px; display: flex; align-items: center; justify-content: center; background: #fff; border-left: 1px solid #cdd6e2; }
.viewbar .m { width: 28px; }
.viewbar .m::after { content: ""; position: absolute; right: 1px; bottom: 3px; border: 2px solid #444; border-top-color: transparent; border-left-color: transparent; }
.mark { position: absolute; left: -14px; bottom: 17px; }

/* dialog */
.dialog { position: absolute; left: 431px; top: 38px; width: 492px; height: 404px; display: flex; flex-direction: column; background: #eef0f2; border: 1px solid #8f9295; box-shadow: inset 0 0 0 3px #c9cccf; padding: 3px; }
.dtitle { display: flex; align-items: center; height: 19px; background: linear-gradient(#fafafa, #e4e6e8); border-bottom: 1px solid #d0d2d5; padding-right: 7px; }
.dtitle h2 { flex: 1; text-align: center; padding-right: 4px; }
.dbody { flex: 1; display: flex; gap: 8px; padding: 7px 7px 7px 7px; }
.cats { display: flex; flex-direction: column; width: 74px; }
.cats h3 { font-size: 11px; font-weight: normal; line-height: 14px; margin-bottom: 2px; }
.cats ul { flex: 1; background: #fff; border: 1px solid #b9bcbf; padding-top: 1px; }
.cats button { display: block; width: 100%; height: 16px; padding-left: 4px; text-align: left; font-size: 11px; line-height: 16px; white-space: nowrap; }
.cats .cur { background: #c4e4f3; }
fieldset { flex: 1; margin: 4px 0 0; padding: 0; border: 0; min-width: 0; font-size: 11px; }
legend { display: flex; align-items: center; gap: 4px; width: 100%; padding: 0; margin-bottom: 8px; }
legend::after { content: ""; flex: 1; height: 1px; background: #cfd2d5; }
.r { display: flex; align-items: center; height: 20px; padding-left: 3px; }
.r input[type=radio] { appearance: none; width: 13px; height: 13px; margin: 0 7px 0 0; border: 1px solid #a5a8ab; border-radius: 7px; background: #fff; }
.r input[type=radio]:checked { background: radial-gradient(circle, #222 0 3px, #fff 4px); border-color: #777; }
.r label { width: 120px; }
.box { height: 22px; width: 63px; margin: 0; padding: 0 4px; border: 1px solid #a9acaf; background: #fff; font: inherit; color: #3c3f44; }
.box:disabled { color: #9b9da0; border-color: #c0c3c6; }
.f { display: flex; align-items: center; height: 26px; padding-left: 30px; gap: 4px; }
.f label { width: 92px; }
.r + .f { margin-top: 2px; }
.dbtns { display: flex; justify-content: flex-end; gap: 4px; padding: 0 4px 4px; }
.dbtns button { width: 57px; height: 22px; border: 1px solid #b5b8bb; border-radius: 2px; background: linear-gradient(#fdfdfd, #eceef0); font-weight: bold; }
.dbtns .ok { background: linear-gradient(#b9e3fc, #86ccf8); border-color: #9cc9e4; }

/* sheet tabs */
.sheets { display: flex; align-items: center; height: 30px; margin-left: 2px; padding: 2px 0 4px; border: 1px solid #cfd2d5; border-left: 0; border-bottom: 0; box-shadow: inset 0 5px 0 -1px #fcfcfc, inset 0 5px 0 0 #dfe1e3; color: #999; }
.nav { width: 29px; height: 18px; display: flex; align-items: center; justify-content: center; border: 1px solid #dcdee0; background: #f4f5f6; margin-top: 3px; }
.add { margin: 0 1px 0 7px; }
.sheet { width: 76px; height: 19px; margin-top: 2px; border: 1px solid #c5cacd; background: #eceef0; font-size: 11px; font-weight: bold; }

/* status bar */
.status { display: flex; align-items: center; height: 33px; padding: 0 19px 0 5px; background: #eef0f2; border-top: 2px solid #97999c; }
.sb { width: 22px; height: 22px; display: flex; align-items: center; justify-content: center; border: 1px solid #c5c8cb; background: #f4f5f6; margin-right: 4px; }
.sb.in { border-color: #999; background: #e1e3e5; }
.status p { flex: 1; display: flex; align-items: center; gap: 5px; margin-left: 5px; padding: 2px 0 10px 7px; border-left: 1px solid #d5d7d9; font-size: 11px; }
.status p::before { content: ""; width: 5px; height: 5px; border-radius: 3px; background: #1414c8; }
.lights { display: flex; align-items: center; gap: 2px; width: 32px; height: 24px; padding-left: 3px; border: solid #d0d2d4; border-width: 0 1px; }
.lights b { width: 6px; height: 6px; border-radius: 3px; background: #cfd0d1; }
.lights .green { width: 11px; height: 11px; border-radius: 6px; background: #4bd04b; }
.find { width: 46px; padding-left: 3px; border-right: 1px solid #d0d2d4; }
.find button { width: 40px; height: 22px; display: flex; align-items: center; justify-content: center; border: 1px solid #b5b8bb; border-radius: 2px; background: #f8f8f8; }
.status select { appearance: none; width: 154px; height: 21px; margin-left: 97px; border: 1px solid #b9bcbf; border-radius: 0; background: linear-gradient(#555, #555) no-repeat right 4px center / 7px 1px, linear-gradient(#555, #555) no-repeat right 5px top 10px / 5px 1px, linear-gradient(#555, #555) no-repeat right 6px top 11px / 3px 1px, linear-gradient(#c5c8cb, #c5c8cb) no-repeat right 15px top / 1px 100%, #f8f8f8; }
```
